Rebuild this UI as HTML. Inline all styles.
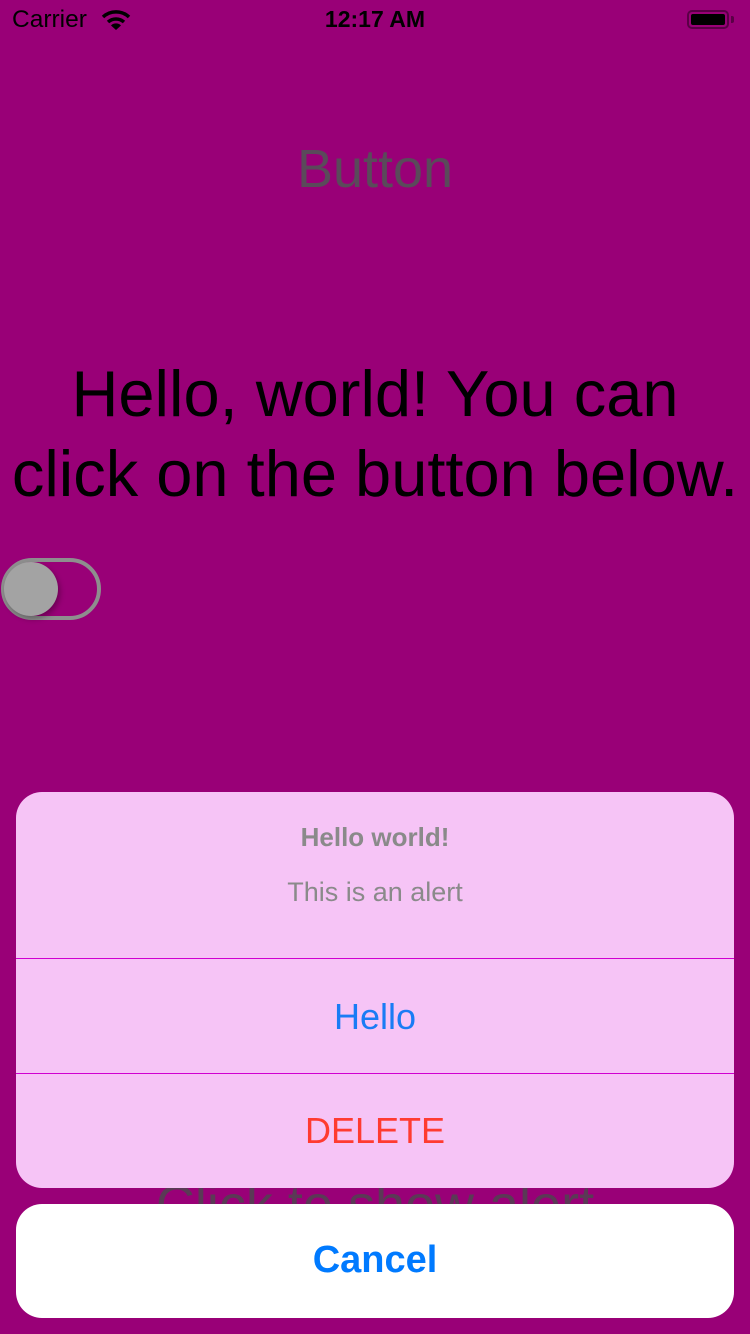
<!DOCTYPE html>
<html><head><style>
body{margin:0;width:750px;height:1334px;background:#990077;font-family:"Liberation Sans",sans-serif;position:relative;overflow:hidden}
.a{position:absolute;left:0;width:750px;text-align:center;white-space:nowrap}
</style></head><body>
<div style="position:absolute;left:12px;top:6px;font-size:24.5px;color:#000">Carrier</div>
<svg style="position:absolute;left:101px;top:9px" width="30" height="22" viewBox="0 0 30 22"><path d="M2 8 A19 19 0 0 1 28 8" stroke="#000" stroke-width="3.5" fill="none"/><path d="M7 13 A12 12 0 0 1 23 13" stroke="#000" stroke-width="3.5" fill="none"/><path d="M15 21 L10 16.5 A7 7 0 0 1 20 16.5 Z" fill="#000"/></svg>
<div class="a" style="top:6px;font-size:23px;font-weight:bold">12:17 AM</div>
<div style="position:absolute;left:687px;top:10px;width:42px;height:19px;border:2px solid #5a0046;border-radius:5px;box-sizing:border-box;padding:2px"><div style="background:#000;height:100%;border-radius:2px"></div></div>
<div style="position:absolute;left:731px;top:16px;width:3px;height:7px;background:#5a0046;border-radius:0 2px 2px 0"></div>
<div class="a" style="top:138px;font-size:54px;color:#5a4a5a">Button</div>
<div class="a" style="top:354px;font-size:65px;line-height:80px;color:#000">Hello, world! You can<br>click on the button below.</div>
<div style="position:absolute;left:1px;top:558px;width:100px;height:62px;border:4px solid #8e8e8e;border-radius:31px;box-sizing:border-box"></div>
<div style="position:absolute;left:4px;top:562px;width:54px;height:54px;border-radius:50%;background:#a3a3a3;box-shadow:2px 3px 6px rgba(0,0,0,.3)"></div>
<div class="a" style="top:1174px;font-size:54px;color:#5a3a55">Click to show alert</div>
<div style="position:absolute;left:16px;top:792px;width:718px;height:396px;background:#f6c4f6;border-radius:26px;overflow:hidden">
<div class="a" style="width:718px;top:30px;font-size:26px;font-weight:bold;color:#8a8a8a">Hello world!</div>
<div class="a" style="width:718px;top:85px;font-size:27px;color:#8a8a8a">This is an alert</div>
<div style="position:absolute;left:0;top:166px;width:718px;height:1px;background:#d000d0"></div>
<div class="a" style="width:718px;top:204px;font-size:36px;color:#1a7cf5">Hello</div>
<div style="position:absolute;left:0;top:281px;width:718px;height:1px;background:#d000d0"></div>
<div class="a" style="width:718px;top:318px;font-size:36px;color:#ff3b30">DELETE</div>
</div>
<div style="position:absolute;left:16px;top:1204px;width:718px;height:114px;background:#fff;border-radius:26px"></div>
<div class="a" style="top:1239px;font-size:38px;font-weight:bold;color:#007aff">Cancel</div>
</body></html>
